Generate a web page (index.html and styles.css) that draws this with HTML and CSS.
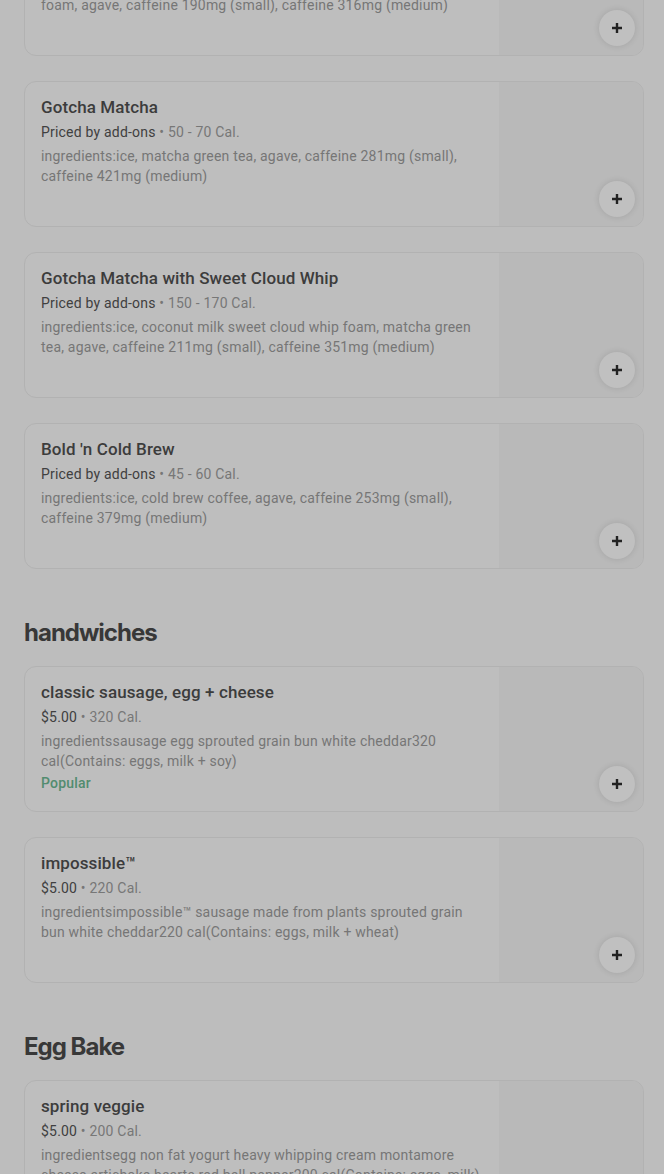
FILE: index.html
```html
<!DOCTYPE html>
<html lang="en">
<head>
    <meta charset="UTF-8">
    <meta name="viewport" content="width=device-width, initial-scale=1.0">
    <title>Menu</title>
    <link rel="stylesheet" href="styles.css">
</head>
<body>
    <div class="menu">
        <!-- Drinks (scrolled past the heading) -->
        <section class="menu-section">
            <div class="item-list">
                <div class="item-card">
                    <div class="item-info">
                        <h3 class="item-name">Cold Brew with Sweet Cloud Whip</h3>
                        <p class="item-price">Priced by add-ons <span class="cal">• 90 - 110 Cal.</span></p>
                        <p class="item-desc">ingredients:ice, cold brew coffee, coconut milk sweet cloud whip foam, agave, caffeine 190mg (small), caffeine 316mg (medium)</p>
                    </div>
                    <div class="item-photo"></div>
                    <button class="add-btn"><svg viewBox="0 0 12 12"><path d="M6 1v10M1 6h10"/></svg></button>
                </div>
                <div class="item-card">
                    <div class="item-info">
                        <h3 class="item-name">Gotcha Matcha</h3>
                        <p class="item-price">Priced by add-ons <span class="cal">• 50 - 70 Cal.</span></p>
                        <p class="item-desc">ingredients:ice, matcha green tea, agave, caffeine 281mg (small), caffeine 421mg (medium)</p>
                    </div>
                    <div class="item-photo"></div>
                    <button class="add-btn"><svg viewBox="0 0 12 12"><path d="M6 1v10M1 6h10"/></svg></button>
                </div>
                <div class="item-card">
                    <div class="item-info">
                        <h3 class="item-name">Gotcha Matcha with Sweet Cloud Whip</h3>
                        <p class="item-price">Priced by add-ons <span class="cal">• 150 - 170 Cal.</span></p>
                        <p class="item-desc">ingredients:ice, coconut milk sweet cloud whip foam, matcha green tea, agave, caffeine 211mg (small), caffeine 351mg (medium)</p>
                    </div>
                    <div class="item-photo"></div>
                    <button class="add-btn"><svg viewBox="0 0 12 12"><path d="M6 1v10M1 6h10"/></svg></button>
                </div>
                <div class="item-card">
                    <div class="item-info">
                        <h3 class="item-name">Bold 'n Cold Brew</h3>
                        <p class="item-price">Priced by add-ons <span class="cal">• 45 - 60 Cal.</span></p>
                        <p class="item-desc">ingredients:ice, cold brew coffee, agave, caffeine 253mg (small), caffeine 379mg (medium)</p>
                    </div>
                    <div class="item-photo"></div>
                    <button class="add-btn"><svg viewBox="0 0 12 12"><path d="M6 1v10M1 6h10"/></svg></button>
                </div>
            </div>
        </section>

        <section class="menu-section">
            <h2 class="section-title">handwiches</h2>
            <div class="item-list">
                <div class="item-card">
                    <div class="item-info">
                        <h3 class="item-name">classic sausage, egg + cheese</h3>
                        <p class="item-price">$5.00 <span class="cal">• 320 Cal.</span></p>
                        <p class="item-desc">ingredientssausage egg sprouted grain bun white cheddar320 cal(Contains: eggs, milk + soy)</p>
                        <p class="item-tag">Popular</p>
                    </div>
                    <div class="item-photo"></div>
                    <button class="add-btn"><svg viewBox="0 0 12 12"><path d="M6 1v10M1 6h10"/></svg></button>
                </div>
                <div class="item-card">
                    <div class="item-info">
                        <h3 class="item-name">impossible™</h3>
                        <p class="item-price">$5.00 <span class="cal">• 220 Cal.</span></p>
                        <p class="item-desc">ingredientsimpossible™ sausage made from plants sprouted grain bun white cheddar220 cal(Contains: eggs, milk + wheat)</p>
                    </div>
                    <div class="item-photo"></div>
                    <button class="add-btn"><svg viewBox="0 0 12 12"><path d="M6 1v10M1 6h10"/></svg></button>
                </div>
            </div>
        </section>

        <section class="menu-section">
            <h2 class="section-title">Egg Bake</h2>
            <div class="item-list">
                <div class="item-card">
                    <div class="item-info">
                        <h3 class="item-name">spring veggie</h3>
                        <p class="item-price">$5.00 <span class="cal">• 200 Cal.</span></p>
                        <p class="item-desc">ingredientsegg non fat yogurt heavy whipping cream montamore cheese artichoke hearts red bell pepper200 cal(Contains: eggs, milk)</p>
                    </div>
                    <div class="item-photo"></div>
                    <button class="add-btn"><svg viewBox="0 0 12 12"><path d="M6 1v10M1 6h10"/></svg></button>
                </div>
            </div>
        </section>
    </div>
</body>
</html>
```

FILE: styles.css
```css
body {
    margin: 0;
    background: #bdbdbd;
    font-family: Roboto, 'Liberation Sans', Arial, sans-serif;
    color: #363636;
    overflow: hidden;
}
.menu {
    /* page is scrolled down into the drinks list */
    margin-top: -90px;
    padding: 0 20px 0 24px;
}
.menu-section {
    margin-bottom: 48px;
}
.section-title {
    font-family: Inter, 'Liberation Sans', Arial, sans-serif;
    font-size: 24px;
    font-weight: 700;
    letter-spacing: -1px;
    line-height: 32px;
    color: #383838;
    margin: 0 0 17px 0;
}
.item-list {
    display: flex;
    flex-direction: column;
    gap: 25px;
}
.item-card {
    position: relative;
    display: flex;
    border: 1px solid #b2b2b2;
    border-radius: 12px;
    overflow: hidden;
    background: #bebebe;
}
.item-info {
    flex: 1;
    padding: 13px 16px 0 16px;
}
.item-name {
    margin: 0;
    font-size: 17px;
    font-weight: 500;
    line-height: 24px;
    letter-spacing: 0.1px;
    color: #3c3c3c;
}
.item-price {
    margin: 3px 0 0 0;
    font-size: 14px;
    line-height: 20px;
    letter-spacing: 0.2px;
    color: #404040;
}
.item-price .cal {
    color: #777;
}
.item-desc {
    margin: 4px 0 0 0;
    font-size: 14px;
    line-height: 20px;
    letter-spacing: 0.2px;
    color: #767676;
}
.item-tag {
    margin: 2px 0 0 0;
    font-size: 14px;
    line-height: 20px;
    font-weight: 500;
    letter-spacing: 0.2px;
    color: #528c6f;
}
.item-photo {
    width: 144px;
    height: 144px;
    flex-shrink: 0;
    background: #b9b9b9;
}
.add-btn {
    position: absolute;
    right: 8px;
    bottom: 9px;
    width: 36px;
    height: 36px;
    border: none;
    border-radius: 50%;
    background: #c0c0c0;
    box-shadow: 0 0 6px rgba(0,0,0,0.12);
    display: flex;
    align-items: center;
    justify-content: center;
    padding: 0;
}
.add-btn svg {
    width: 12px;
    height: 12px;
    stroke: #222;
    stroke-width: 2.4;
    fill: none;
}
```
